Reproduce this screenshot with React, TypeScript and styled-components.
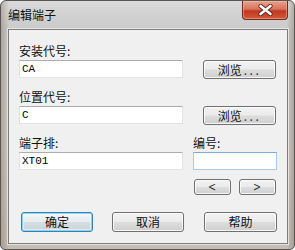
import React from "react";
import styled, { createGlobalStyle, css } from "styled-components";

const Global = createGlobalStyle`
  html, body { margin: 0; padding: 0; background: #ffffff; }
  * { box-sizing: border-box; }
`;

const cjk = `"Noto Sans CJK SC", "Noto Sans", sans-serif`;

const Window = styled.div`
  width: 295px;
  height: 250px;
  border: 1px solid #5a5550;
  border-radius: 6px 6px 5px 5px;
  background:
    linear-gradient(90deg, rgba(120,100,80,0.35) 0px, rgba(120,100,80,0) 8px, rgba(0,0,0,0) 286px, rgba(110,95,80,0.35) 293px),
    linear-gradient(180deg, #d9d9d9 0%, #c9c9c9 12%, #cdc9c4 60%, #c4bdb5 100%);
  display: flex;
  flex-direction: column;
  overflow: hidden;
  font-family: ${cjk};
`;

const TitleBar = styled.div`
  height: 28px;
  display: flex;
  align-items: flex-start;
`;

const Title = styled.div`
  padding: 6px 0 0 7px;
  font-size: 12px;
  line-height: 16px;
  color: #111;
`;

const CloseButton = styled.div`
  margin-left: auto;
  margin-right: 6px;
  width: 46px;
  height: 19px;
  border: 1px solid #6e2a1c;
  border-top: none;
  border-radius: 0 0 4px 4px;
  background: linear-gradient(180deg, #e8a18e 0%, #d8735c 45%, #c1381f 55%, #cf5a3c 100%);
  box-shadow: inset 0 0 0 1px rgba(255, 200, 180, 0.45);
  display: flex;
  align-items: center;
  justify-content: center;
`;

const Body = styled.div`
  flex: 1;
  padding: 0 6px 5px 7px;
  display: flex;
`;

const Client = styled.div`
  flex: 1;
  background: #f0f0f0;
  border: 1px solid #7d7d7d;
  box-shadow: 0 0 0 1px rgba(255, 255, 255, 0.55);
  padding: 14px 0 0 10px;
  display: flex;
  flex-direction: column;
`;

const Label = styled.div<{ $top?: number }>`
  height: 14px;
  line-height: 14px;
  font-size: 12px;
  color: #111;
  margin-top: ${(p) => p.$top ?? 0}px;
`;

const Row = styled.div<{ $top?: number }>`
  display: flex;
  align-items: flex-start;
  margin-top: ${(p) => p.$top ?? 0}px;
`;

const Input = styled.div<{ $w: number; $focus?: boolean }>`
  width: ${(p) => p.$w}px;
  height: 18px;
  background: #ffffff;
  border: 1px solid #dfe3e8;
  border-top-color: #acadb2;
  padding-left: 2px;
  font-family: "Liberation Mono", "DejaVu Sans Mono", monospace;
  font-size: 11px;
  line-height: 16px;
  color: #000;
  ${(p) =>
    p.$focus &&
    css`
      border-color: #a9c9ea;
      border-top-color: #7fa9d6;
    `}
`;

const Button = styled.div<{ $w: number; $h: number; $ml?: number; $default?: boolean }>`
  width: ${(p) => p.$w}px;
  height: ${(p) => p.$h}px;
  margin-left: ${(p) => p.$ml ?? 0}px;
  border: 1px solid #707070;
  border-radius: 3px;
  background: linear-gradient(180deg, #f2f2f2 0%, #ebebeb 48%, #dddddd 52%, #cfcfcf 100%);
  box-shadow: inset 0 0 0 1px rgba(255, 255, 255, 0.8);
  display: flex;
  align-items: center;
  justify-content: center;
  font-size: 12px;
  color: #111;
  line-height: 1;
  ${(p) =>
    p.$default &&
    css`
      border-color: #3c7fb1;
      box-shadow: inset 0 0 0 1px #7fd6f5, inset 0 0 0 2px rgba(255, 255, 255, 0.5);
      background: linear-gradient(180deg, #f0f4f6 0%, #e6ecef 48%, #d6dee2 52%, #c9d3d8 100%);
    `}
`;

const Dots = styled.span`
  letter-spacing: 2.5px;
  margin-left: 2px;
  color: #333;
`;

const Arrow = styled.span`
  font-family: "DejaVu Sans", sans-serif;
  font-size: 12px;
  color: #333;
  transform: scaleX(0.8);
`;

const Column = styled.div<{ $ml?: number }>`
  display: flex;
  flex-direction: column;
  margin-left: ${(p) => p.$ml ?? 0}px;
`;

const CloseIcon = () => (
  <svg width="15" height="12" viewBox="0 0 15 12">
    <path d="M2.5 2 L12.5 10 M12.5 2 L2.5 10" stroke="#5a2417" strokeWidth="4.2" strokeLinecap="round" />
    <path d="M2.5 2 L12.5 10 M12.5 2 L2.5 10" stroke="#ffffff" strokeWidth="2.6" strokeLinecap="round" />
  </svg>
);

export default function App() {
  return (
    <>
      <Global />
      <Window>
        <TitleBar>
          <Title>编辑端子</Title>
          <CloseButton>
            <CloseIcon />
          </CloseButton>
        </TitleBar>
        <Body>
          <Client>
            <Label>安装代号:</Label>
            <Row $top={2}>
              <Input $w={164}>CA</Input>
              <Button $w={73} $h={19} $ml={20}>
                浏览<Dots>...</Dots>
              </Button>
            </Row>
            <Label $top={11}>位置代号:</Label>
            <Row $top={2}>
              <Input $w={164}>C</Input>
              <Button $w={73} $h={19} $ml={20}>
                浏览<Dots>...</Dots>
              </Button>
            </Row>
            <Row $top={11}>
              <Column>
                <Label>端子排:</Label>
                <Row $top={2}>
                  <Input $w={164}>XT01</Input>
                </Row>
              </Column>
              <Column $ml={10}>
                <Label>编号:</Label>
                <Row $top={2}>
                  <Input $w={84} $focus />
                </Row>
                <Row $top={9}>
                  <Button $w={37} $h={16} $ml={1}>
                    <Arrow>&lt;</Arrow>
                  </Button>
                  <Button $w={37} $h={16} $ml={8}>
                    <Arrow>&gt;</Arrow>
                  </Button>
                </Row>
              </Column>
            </Row>
            <Row $top={17}>
              <Button $w={72} $h={20} $ml={2} $default>确定</Button>
              <Button $w={72} $h={20} $ml={19}>取消</Button>
              <Button $w={73} $h={20} $ml={20}>帮助</Button>
            </Row>
          </Client>
        </Body>
      </Window>
    </>
  );
}
